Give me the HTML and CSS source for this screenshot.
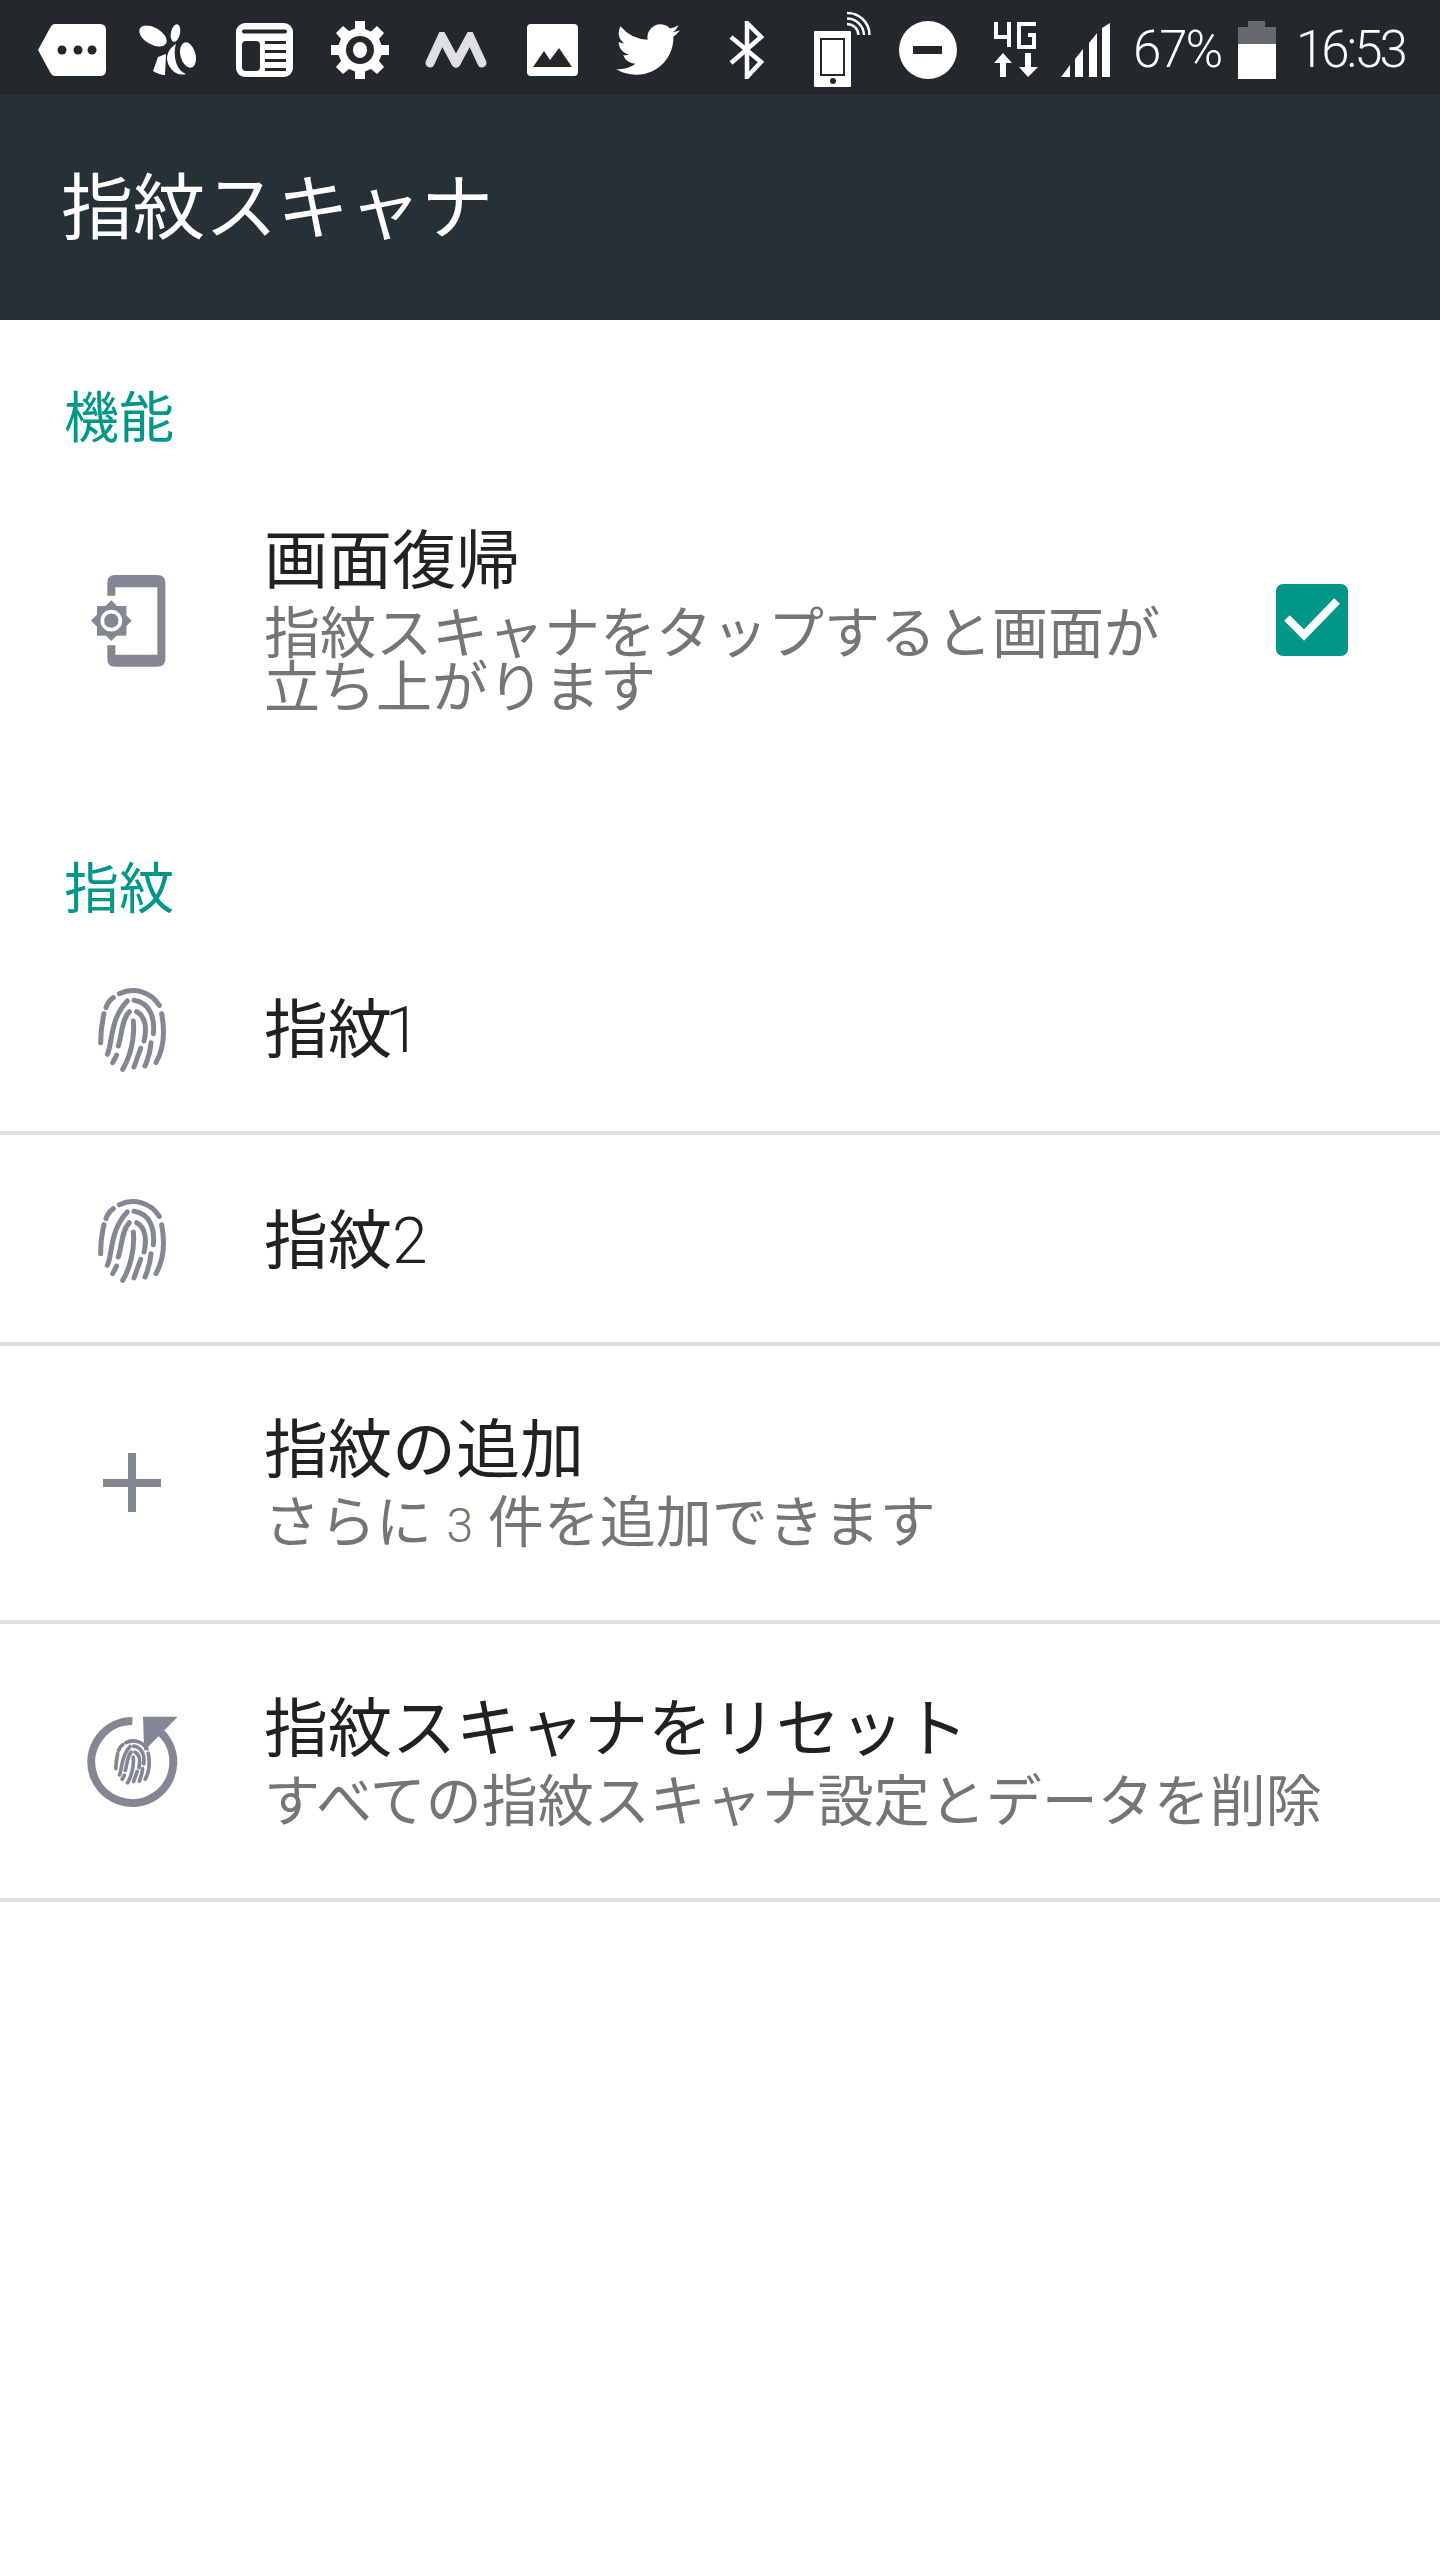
FILE: index.html
```html
<!DOCTYPE html>
<html lang="ja">
<head>
<meta charset="utf-8">
<title>指紋スキャナ</title>
<link rel="stylesheet" href="styles.css">
</head>
<body>
<svg class="defs" width="0" height="0" aria-hidden="true">
  <defs>
    <g id="fp" fill="none" stroke-linecap="round">
      <path d="M148 98C190 78 240 90 268 133"/>
      <path d="M108 140Q115 120 130 110"/>
      <path d="M92 245Q92 200 102 158"/>
      <path d="M112 280C128 250 118 175 172 120"/>
      <path d="M192 118C240 125 255 170 250 218"/>
      <path d="M258 305C280 265 285 210 275 158"/>
      <path d="M145 255C155 225 155 175 178 152"/>
      <path d="M200 152C225 165 232 200 222 240"/>
      <path d="M190 180C195 230 180 290 158 325"/>
      <path d="M212 262L192 318"/>
      <path d="M243 245Q240 280 225 315"/>
      <path d="M140 282L128 305"/>
    </g>
  </defs>
</svg>
<div class="screen">
  <div class="statusbar">
    <div class="slot"><svg width="68" height="52" viewBox="0 0 68 52"><path class="w" d="M17 0H62Q68 0 68 6V46Q68 52 62 52H17Q14 52 12 48L0 26 12 4Q14 0 17 0Z"/><circle class="k" cx="24" cy="26" r="4.500"/><circle class="k" cx="40" cy="26" r="4.500"/><circle class="k" cx="54" cy="26" r="4.500"/></svg></div>
    <div class="slot"><svg width="60" height="52" viewBox="0 0 60 52"><ellipse class="w" cx="15" cy="12" rx="15" ry="8.500" transform="rotate(30 15 12)"/><ellipse class="w" cx="37.500" cy="9" rx="4.500" ry="9" transform="rotate(12 37.500 9)"/><ellipse class="w" cx="50" cy="31" rx="7.500" ry="13" transform="rotate(-15 50 31)"/><path class="w" d="M38 20C35 30 37 46 48 50 38 53 30 44 29 35 29 28 33 23 38 20Z"/><path class="w" d="M20 33L28 30 27 51C23 51 18 49 15 47Z"/></svg></div>
    <div class="slot"><svg width="57" height="54" viewBox="0 0 57 54"><rect class="w" width="57" height="54" rx="9"/><rect class="k" x="6" y="6.500" width="45" height="4" rx="2"/><rect class="k" x="6" y="18" width="18" height="30" rx="4"/><rect class="k" x="29" y="18" width="21" height="3"/><rect class="k" x="29" y="27" width="21" height="3"/><rect class="k" x="29" y="36" width="21" height="3"/><rect class="k" x="29" y="45" width="21" height="3"/></svg></div>
    <div class="slot"><svg width="58" height="58" viewBox="0 0 58 58"><path class="w" d="M24 0H34V8L40 10.500 46 5 53 12 48 18 50.500 24H58V34H50.500L48 40 53 46 46 53 40 48 34 50.500V58H24V50.500L18 48 12 53 5 46 10 40 7.500 34H0V24H7.500L10 18 5 12 12 5 18 10 24 7.500Z"/><circle class="k" cx="29" cy="29" r="14"/><ellipse class="w" cx="29" cy="29" rx="7" ry="8"/></svg></div>
    <div class="slot"><svg width="62" height="36" viewBox="0 0 62 36"><g fill="none" stroke="#fff" stroke-linecap="round" stroke-width="9" opacity=".86"><path d="M5 31L17 5 31 31"/><path d="M31 31L45 5 57 31"/></g></svg></div>
    <div class="slot"><svg width="51" height="52" viewBox="0 0 51 52"><rect class="w" width="51" height="52" rx="4"/><path class="k" d="M6 43L17 27 23 36 32 24 45 43Z"/></svg></div>
    <div class="slot"><svg width="64" height="52" viewBox="0 0 24 20" preserveAspectRatio="none"><path class="w" d="M24 2.400a9.700 9.700 0 0 1-2.800.8 4.900 4.900 0 0 0 2.200-2.700 9.800 9.800 0 0 1-3.100 1.200A4.900 4.900 0 0 0 11.900 6.100 13.900 13.900 0 0 1 1.700.900a4.900 4.900 0 0 0 1.500 6.600 4.900 4.900 0 0 1-2.200-.6c0 2.400 1.700 4.400 3.900 4.900a4.900 4.900 0 0 1-2.200.1 4.900 4.900 0 0 0 4.600 3.400A9.900 9.900 0 0 1 0 17.300 13.900 13.900 0 0 0 7.500 19.500c9.100 0 14.300-7.700 14-14.600A10 10 0 0 0 24 2.400Z"/></svg></div>
    <div class="slot bt"><svg width="36" height="58" viewBox="0 0 36 58"><path fill="none" stroke="#fff" stroke-width="4.500" d="M2 16L32 41 18 56V2L32 16 2 42"/></svg></div>
    <div class="slot"><svg class="phone" width="58" height="76" viewBox="0 0 58 76"><rect class="w" y="20" width="37" height="56" rx="1"/><rect class="k" x="6" y="27" width="25" height="38"/><rect class="w" x="8" y="29" width="21" height="34"/><circle class="k" cx="19" cy="70" r="3"/><g fill="none" stroke="#fff" stroke-width="2.500"><path d="M33 2A22 22 0 0 1 55.500 24"/><path d="M33 7.500A17 17 0 0 1 50 24"/><path d="M33 13A11.500 11.500 0 0 1 44.500 24"/></g></svg></div>
    <div class="dnd"><svg width="58" height="58" viewBox="0 0 58 58"><circle class="w" cx="29" cy="29" r="29"/><rect class="k" x="14" y="25" width="29" height="8"/></svg></div>
    <div class="net"><svg width="44" height="56" viewBox="0 0 44 56"><g fill="none" stroke="#fff" stroke-width="4"><path d="M2 0V15H15M15 0V25"/><path d="M42 2H25V25H40V13H34"/></g><path class="w" d="M9 31L18 41H12V55H6V41H0Z"/><path class="w" d="M34 55L25 45H31V31H37V45H44Z"/></svg></div>
    <div class="signal"><svg width="49" height="54" viewBox="0 0 49 54"><path class="w" d="M0 54L9 42V54ZM14 54V36L22 26V54ZM28 54V20L36 10V54ZM41 54V5L49 0V54Z"/></svg></div>
    <div class="pct">67%</div>
    <div class="batt"><svg width="38" height="58" viewBox="0 0 38 58"><path fill="#666a6c" d="M10 0H27V6H38V24H0V6H10Z"/><rect class="w" y="23" width="38" height="35"/></svg></div>
    <div class="clock">16:53</div>
  </div>
  <header class="appbar">指紋スキャナ</header>
  <main>
    <h2 class="section first">機能</h2>
    <div class="row pref">
      <div class="icon"><svg width="200" height="150" viewBox="0 15 600 450"><path class="g" d="M142 167V128Q142 105 165 105H292Q316 105 316 128V357Q316 380 292 380H165Q142 380 142 357V316H166V344H292V142H166V167Z"/><rect class="g" x="111" y="198" width="88" height="89"/><path class="g" d="M154 181L215 242 154 303 93 242Z"/><circle cx="154" cy="242" r="27" fill="#838793" stroke="#fff" stroke-width="11"/></svg></div>
      <div class="text narrow">
        <div class="title">画面復帰</div>
        <div class="sub">指紋スキャナをタップすると画面が立ち上がります</div>
      </div>
      <div class="check"><svg width="72" height="72" viewBox="0 0 72 72"><rect width="72" height="72" rx="7" fill="#009688"/><path d="M11 34L28 51 61 17" fill="none" stroke="#fff" stroke-width="8"/></svg></div>
    </div>
    <h2 class="section second">指紋</h2>
    <div class="row short">
      <div class="icon"><svg class="fpi" width="130" height="130" viewBox="0 6 390 390"><use href="#fp"/></svg></div>
      <div class="text"><div class="title">指紋<span class="num one">1</span></div></div>
    </div>
    <div class="row short">
      <div class="icon"><svg class="fpi" width="130" height="130" viewBox="0 6 390 390"><use href="#fp"/></svg></div>
      <div class="text"><div class="title">指紋<span class="num">2</span></div></div>
    </div>
    <div class="row tall">
      <div class="icon"><svg width="130" height="130" viewBox="0 0 130 130"><path class="g" d="M58 35H66V61H91V69H66V94H58V69H33V61H58Z"/></svg></div>
      <div class="text">
        <div class="title">指紋の追加</div>
        <div class="sub">さらに <span class="num">3</span> 件を追加できます</div>
      </div>
    </div>
    <div class="row tall reset">
      <div class="icon"><svg class="fpr" width="130" height="130" viewBox="0 15 390 390"><path fill="none" stroke="#838793" stroke-width="24" d="M187 90A123 123 0 1 0 265 118"/><path class="g" d="M230 88H298L232 155Z"/><use href="#fp" transform="translate(89 103) scale(.53)"/></svg></div>
      <div class="text">
        <div class="title">指紋スキャナをリセット</div>
        <div class="sub">すべての指紋スキャナ設定とデータを削除</div>
      </div>
    </div>
  </main>
</div>
</body>
</html>
```

FILE: styles.css
```css
* { box-sizing: border-box; }
html, body { margin: 0; background: #fff; }
body { font-family: "Noto Sans CJK JP", "Noto Sans", sans-serif; }
.defs { display: block; height: 0; }
.screen { width: 1440px; height: 2560px; overflow: hidden; background: #fff; }

.statusbar { height: 95px; background: #22282c; display: flex; align-items: center; padding: 5px 0 0 24px; color: #fff; }
.statusbar svg { display: block; }
.w { fill: #fff; }
.k { fill: #22282c; }
.slot { width: 96px; display: flex; justify-content: center; align-items: center; flex: none; }
.slot.bt { margin-left: 3px; }
.phone { margin-top: -3px; }
.dnd { margin-left: -11px; width: 96px; display: flex; justify-content: center; flex: none; }
.net { margin-left: 18px; }
.signal { margin-left: 23px; }
.pct, .clock { font-family: Roboto, sans-serif; font-weight: 300; font-size: 51px; line-height: 60px; flex: none; }
.pct { margin-left: 23px; width: 92px; white-space: nowrap; letter-spacing: -2px; }
.batt { margin-left: 13px; }
.clock { margin-left: 20px; letter-spacing: -3px; }

.appbar { height: 225px; background: #263037; color: #fff; font-size: 72px; line-height: 100px; padding: 57px 0 0 61px; }

.section { margin: 0; font-weight: 400; color: #009688; font-size: 55px; line-height: 70px; padding-left: 64px; }
.section.first { padding-top: 58px; margin-bottom: 2px; }
.section.second { padding-top: 59px; margin-bottom: 5px; }

.row { display: flex; align-items: center; }
.row.pref { height: 340px; }
.row.short { height: 211px; border-bottom: 4px solid #e0e0e0; }
.row.tall { height: 278px; border-bottom: 4px solid #e0e0e0; }
.row .icon { width: 264px; flex: none; padding-left: 70px; }
.row.pref .icon { padding-left: 60px; }
.icon svg { display: block; }
.g { fill: #838793; }
.fpi, .fpr { stroke: #838793; }
.fpi { stroke-width: 15; }
.fpr { stroke-width: 21; }

.text { flex: 1; min-width: 0; }
.text.narrow { flex: none; width: 912px; padding-bottom: 12px; }
.row.tall .text { padding-bottom: 6px; }
.row.tall.reset .text { padding-bottom: 12px; }
.title { font-size: 64px; line-height: 72px; color: #212121; }
.sub { font-size: 56px; line-height: 54px; color: #757575; margin-top: 11px; }
.num { font-family: Roboto, sans-serif; font-weight: 300; }
.title .num.one { margin-left: -7px; }
.sub .num { font-size: 48px; margin: 0 2px; }
.check { margin-left: 100px; }
.check svg { display: block; }
```
